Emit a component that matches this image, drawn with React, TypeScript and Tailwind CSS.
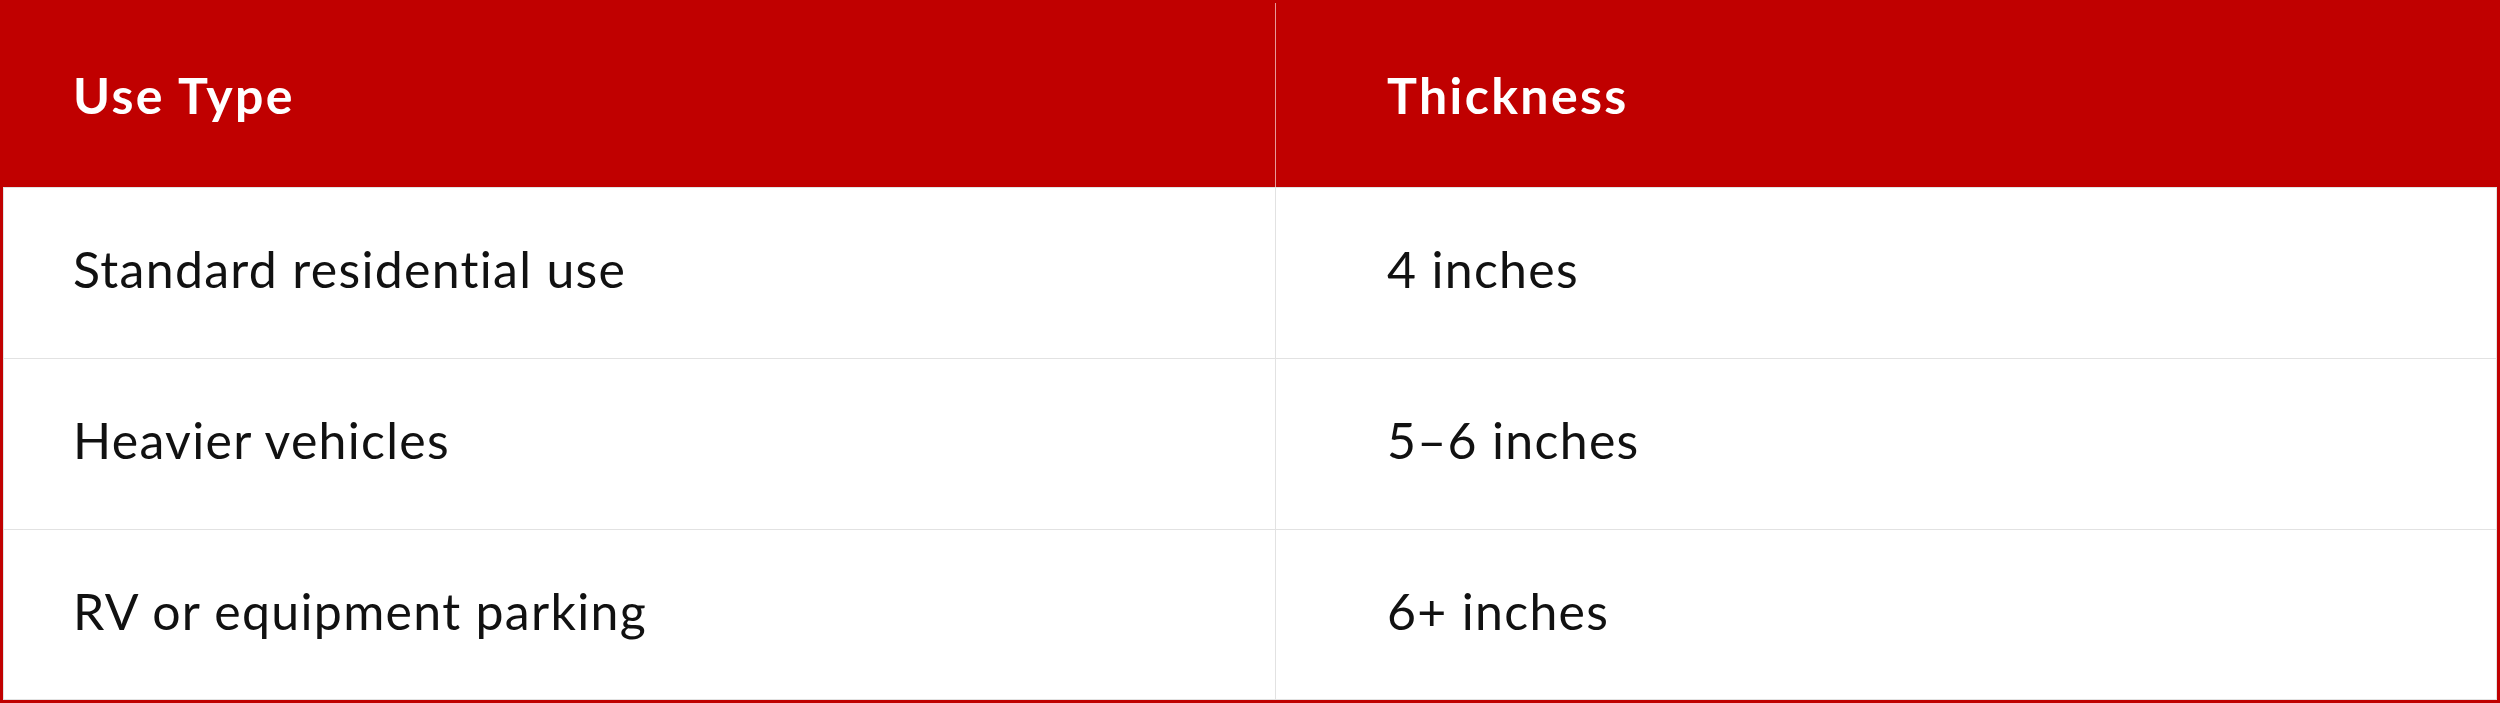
export default function App() {
  const rows = [
    ["Standard residential use", "4 inches"],
    ["Heavier vehicles", "5–6 inches"],
    ["RV or equipment parking", "6+ inches"],
  ];
  return (
    <div className="w-[2500px] h-[703px] bg-white border-[3px] border-[#c00000] flex flex-col [font-variant-ligatures:none]" style={{ fontFamily: "Lato, 'Open Sans', sans-serif" }}>
      <div className="grid grid-cols-[1273px_1fr] h-[184px] bg-[#c00000] text-white font-bold text-[50px] tracking-[0.048em]">
        <div className="flex items-center pl-[70px] border-r border-[rgba(255,255,255,0.6)]">Use Type</div>
        <div className="flex items-center pl-[111px]">Thickness</div>
      </div>
      {rows.map((r, i) => (
        <div key={i} className={"grid grid-cols-[1273px_1fr] h-[171px] border-t border-[#e2e2e2] text-[#111] text-[50px] tracking-[0.026em] " + (i === 2 ? "border-b" : "")}>
          <div className="flex items-center pl-[69px] pb-[7px] border-l border-r border-[#e2e2e2]">{r[0]}</div>
          <div className="flex items-center pl-[111px] pb-[7px] border-r border-[#e2e2e2]">{r[1]}</div>
        </div>
      ))}
    </div>
  );
}
